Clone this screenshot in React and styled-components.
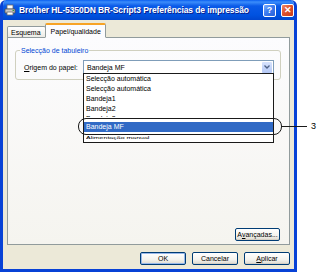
import React from "react";
import styled, { createGlobalStyle } from "styled-components";

const GlobalStyle = createGlobalStyle`
  html, body {
    margin: 0;
    padding: 0;
    background: #ffffff;
  }
  body {
    font-family: "Liberation Sans", Arial, sans-serif;
    font-size: 7px;
    color: #000;
  }
`;

const Stage = styled.div`
  position: relative;
  width: 323px;
  height: 272px;
  display: flex;
  overflow: hidden;
`;

const Window = styled.div`
  width: 297px;
  height: 272px;
  box-sizing: border-box;
  display: flex;
  flex-direction: column;
  background: #ece9d8;
  border: 3px solid #0842d6;
  border-top: none;
  border-radius: 6px 6px 0 0;
  overflow: hidden;
`;

const TitleBar = styled.div`
  height: 20px;
  margin: 0 -3px;
  padding: 0 3px 0 4px;
  display: flex;
  align-items: center;
  gap: 3px;
  background: linear-gradient(
    to bottom,
    #0a5ff0 0%,
    #3b8dfb 10%,
    #0a5ae8 30%,
    #0052e0 75%,
    #0046cf 100%
  );
  border-radius: 6px 6px 0 0;
`;

const Title = styled.div`
  flex: 1;
  color: #fff;
  font-weight: bold;
  font-size: 8.5px;
  letter-spacing: -0.1px;
  white-space: nowrap;
  text-shadow: 1px 1px 0 #0a1e8a;
`;

const CaptionButton = styled.div`
  width: 11px;
  height: 11px;
  border: 1px solid #fff;
  border-radius: 2px;
  display: flex;
  align-items: center;
  justify-content: center;
  color: #fff;
  font-weight: bold;
  font-size: 9px;
  line-height: 1;
  background: ${(p) =>
    p.$close
      ? "linear-gradient(135deg, #f08a6a 0%, #e0522e 45%, #c83c1c 100%)"
      : "linear-gradient(135deg, #7fb0ff 0%, #3d7cf0 45%, #2a60d8 100%)"};
  margin-left: ${(p) => (p.$close ? "2px" : "0")};
`;

const Body = styled.div`
  flex: 1;
  display: flex;
  flex-direction: column;
  padding: 2px 4px 0 4px;
`;

const TabStrip = styled.div`
  height: 15px;
  display: flex;
  align-items: flex-end;
  position: relative;
  z-index: 1;
`;

const Tab = styled.div`
  box-sizing: border-box;
  height: ${(p) => (p.$active ? "15px" : "11px")};
  padding: ${(p) => (p.$active ? "3px 4px 0 5px" : "2px 4px 0 3px")};
  border: 1px solid #919b9c;
  border-bottom: ${(p) => (p.$active ? "1px solid #fcfcfe" : "none")};
  border-top: ${(p) => (p.$active ? "2px solid #f7a325" : "1px solid #919b9c")};
  border-radius: 2px 2px 0 0;
  background: ${(p) =>
    p.$active ? "#fcfcfe" : "linear-gradient(to bottom, #fff, #ecebe5)"};
  margin-bottom: ${(p) => (p.$active ? "-1px" : "0")};
  margin-left: ${(p) => (p.$active ? "-1px" : "0")};
  white-space: nowrap;
  font-size: 7px;
  line-height: 8px;
`;

const TabPanel = styled.div`
  height: 208px;
  box-sizing: border-box;
  border: 1px solid #919b9c;
  background: linear-gradient(to bottom, #fcfcfe 0%, #f5f4ef 100%);
  display: flex;
  flex-direction: column;
  padding: 12px 8px 3px 7px;
`;

const GroupBox = styled.div`
  position: relative;
  height: 30px;
  box-sizing: border-box;
  border: 1px solid #d0d0bf;
  border-radius: 3px;
  display: flex;
  align-items: center;
  padding: 4px 6px 0 8px;
`;

const Legend = styled.span`
  position: absolute;
  top: -5px;
  left: 4px;
  padding: 0 1px;
  background: #fbfbfc;
  color: #0046d5;
  font-size: 7px;
  line-height: 9px;
`;

const FieldLabel = styled.span`
  width: 59px;
  white-space: nowrap;
`;

const Combo = styled.div`
  position: relative;
  flex: 1;
  height: 14px;
  box-sizing: border-box;
  border: 1px solid #7f9db9;
  background: #fff;
  display: flex;
  align-items: center;
  padding: 0 1px 0 3px;
`;

const ComboText = styled.span`
  flex: 1;
`;

const ComboArrow = styled.div`
  width: 10px;
  height: 11px;
  border-radius: 1px;
  background: linear-gradient(to bottom, #d7e3fd, #b4c8f6);
  display: flex;
  align-items: center;
  justify-content: center;
`;

const DropList = styled.div`
  position: absolute;
  top: 12px;
  left: -1px;
  right: -1px;
  height: 70px;
  box-sizing: border-box;
  border: 1px solid #1a1a1a;
  background: #fff;
  display: flex;
  flex-direction: column;
  z-index: 2;
`;

const Item = styled.div`
  height: ${(p) => p.$h || 10}px;
  flex-shrink: 0;
  overflow: hidden;
  padding-left: 2px;
  line-height: 10px;
  white-space: nowrap;
  background: ${(p) => (p.$selected ? "#316ac5" : "transparent")};
  color: ${(p) => (p.$selected ? "#fff" : "#000")};
  margin-top: ${(p) => p.$mt || 0}px;
`;

const SquashedItem = styled.div`
  height: 6px;
  margin-top: 3px;
  padding-left: 2px;
  line-height: 6px;
  white-space: nowrap;
  transform: scaleY(0.6);
  transform-origin: left center;
`;

const Spacer = styled.div`
  flex: 1;
`;

const XPButton = styled.div`
  box-sizing: border-box;
  width: ${(p) => p.$w || 46}px;
  height: 13px;
  border: 1px solid #003c74;
  border-radius: 2px;
  background: linear-gradient(to bottom, #ffffff 0%, #f4f3ee 60%, #dcdad0 100%);
  box-shadow: ${(p) =>
    p.$focus ? "inset 0 0 0 1px #98b8ea" : "inset 0 -1px 0 #d6d0c5"};
  display: flex;
  align-items: center;
  justify-content: center;
  font-size: 7px;
  white-space: nowrap;
`;

const PanelFooter = styled.div`
  display: flex;
  justify-content: flex-end;
  padding-right: 1px;
`;

const ButtonRow = styled.div`
  display: flex;
  justify-content: flex-end;
  gap: 6px;
  padding: 7px 0 0 0;
`;

const Callout = styled.div`
  position: absolute;
  left: 78px;
  top: 118px;
  width: 204px;
  height: 17px;
  box-sizing: border-box;
  border: 1px solid #1a1a1a;
  border-radius: 8px;
  z-index: 3;
`;

const LeaderLine = styled.div`
  position: absolute;
  left: 282px;
  top: 126px;
  width: 25px;
  height: 1px;
  background: #1a1a1a;
`;

const CalloutNumber = styled.div`
  position: absolute;
  left: 311px;
  top: 120px;
  font-size: 9px;
  line-height: 12px;
  color: #000;
`;

const U = styled.span`
  text-decoration: underline;
`;

const PrinterIcon = () => (
  <svg width="12" height="12" viewBox="0 0 12 12">
    <rect x="3" y="1" width="6" height="4" fill="#fff" stroke="#6a6a6a" strokeWidth="0.8" />
    <path d="M1 5h10v4H1z" fill="#c8c8c8" stroke="#505050" strokeWidth="0.8" />
    <rect x="3" y="8" width="6" height="3" fill="#fff" stroke="#6a6a6a" strokeWidth="0.8" />
    <rect x="8.5" y="6" width="1.5" height="1" fill="#3a9a3a" />
  </svg>
);

const Chevron = () => (
  <svg width="6" height="4" viewBox="0 0 6 4">
    <path d="M0.5 0.5 L3 3 L5.5 0.5" fill="none" stroke="#4d6185" strokeWidth="1.3" />
  </svg>
);

const items = [
  "Selecção automática",
  "Selecção automática",
  "Bandeja1",
  "Bandeja2",
];

export default function App() {
  return (
    <>
      <GlobalStyle />
      <Stage>
        <Window>
          <TitleBar>
            <PrinterIcon />
            <Title>Brother HL-5350DN BR-Script3 Preferências de impressão</Title>
            <CaptionButton>?</CaptionButton>
            <CaptionButton $close>✕</CaptionButton>
          </TitleBar>
          <Body>
            <TabStrip>
              <Tab>Esquema</Tab>
              <Tab $active>Papel/qualidade</Tab>
            </TabStrip>
            <TabPanel>
              <GroupBox>
                <Legend>Selecção de tabuleiro</Legend>
                <FieldLabel>
                  <U>O</U>rigem do papel:
                </FieldLabel>
                <Combo>
                  <ComboText>Bandeja MF</ComboText>
                  <ComboArrow>
                    <Chevron />
                  </ComboArrow>
                  <DropList>
                    {items.map((t, i) => (
                      <Item key={i}>{t}</Item>
                    ))}
                    <Item $h={3}>Bandeja3</Item>
                    <Item $selected $mt={5}>
                      Bandeja MF
                    </Item>
                    <SquashedItem>Alimentação manual</SquashedItem>
                  </DropList>
                </Combo>
              </GroupBox>
              <Spacer />
              <PanelFooter>
                <XPButton $w={45}>
                  A<U>v</U>ançadas...
                </XPButton>
              </PanelFooter>
            </TabPanel>
            <ButtonRow>
              <XPButton $focus>OK</XPButton>
              <XPButton>Cancelar</XPButton>
              <XPButton>
                <U>A</U>plicar
              </XPButton>
            </ButtonRow>
          </Body>
        </Window>
        <Callout />
        <LeaderLine />
        <CalloutNumber>3</CalloutNumber>
      </Stage>
    </>
  );
}
